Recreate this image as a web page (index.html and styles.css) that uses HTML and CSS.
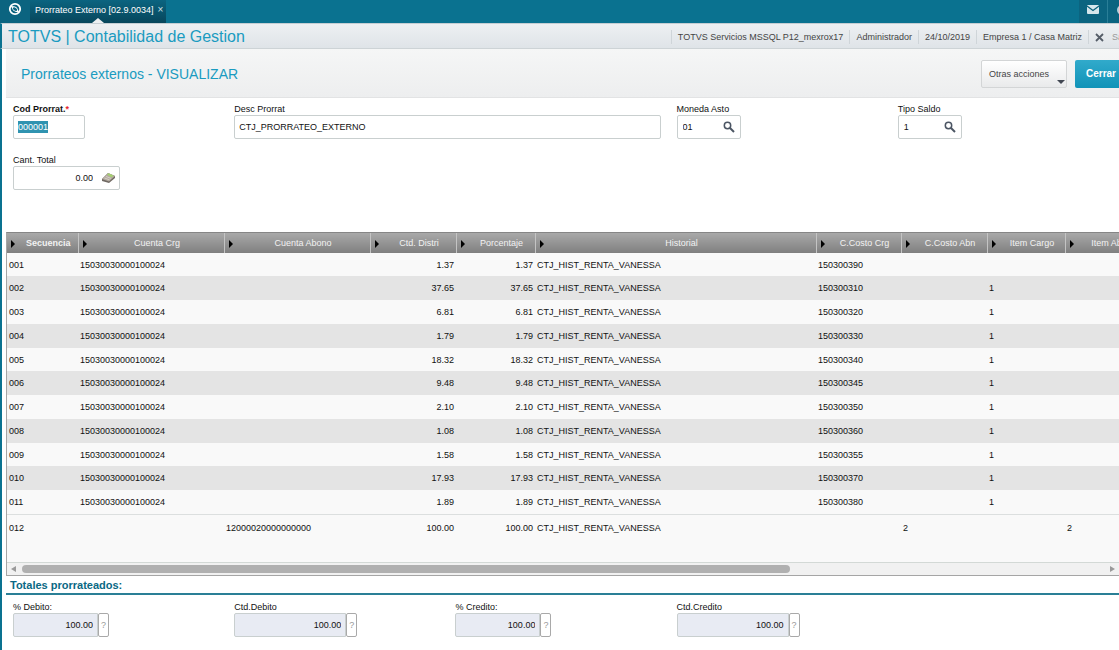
FILE: index.html
```html
<!DOCTYPE html>
<html lang="es">
<head>
    <meta charset="UTF-8">
    <meta name="viewport" content="width=device-width, initial-scale=1.0">
    <title>TOTVS | Contabilidad de Gestion</title>
    <link rel="stylesheet" href="styles.css">
</head>
<body>
    <!-- Barra superior -->
    <nav class="topbar">
        <a class="logo" href="#" aria-label="TOTVS">
            <svg width="14" height="14" viewBox="0 0 14 14">
                <circle cx="7" cy="7" r="5.200" fill="none" stroke="#fff" stroke-width="1.800"/>
                <path d="M2.500 4L6 4.200Q9.500 5 10 8L11.500 10.500L8 9.900Q4.500 9 4 6Z" fill="#fff"/>
                <ellipse cx="7" cy="7.100" rx="2.400" ry="1.400" transform="rotate(35 7 7.100)" fill="#0b6480"/>
            </svg>
        </a>
        <div class="tab">
            <a href="#">Prorrateo Externo [02.9.0034]</a>
            <button class="tab-close" aria-label="Cerrar ficha">×</button>
        </div>
        <div class="top-icons">
            <a class="top-icon" href="#" aria-label="Mensajes">
                <svg width="12" height="9" viewBox="0 0 12 9">
                    <rect width="12" height="9" rx="1" fill="#d6e6ec"/>
                    <path d="M0 1L6 5.500L12 1" fill="none" stroke="#0a6079" stroke-width="1.200"/>
                </svg>
            </a>
            <a class="top-icon" href="#" aria-label="Ayuda">
                <svg width="10" height="10" viewBox="0 0 10 10"><circle cx="5" cy="5" r="4" fill="none" stroke="#b7d0d9" stroke-width="2"/></svg>
            </a>
        </div>
    </nav>

    <!-- Cabecera del modulo -->
    <header class="module">
        <h1>TOTVS | Contabilidad de Gestion</h1>
        <ul class="info">
            <li>TOTVS Servicios MSSQL P12_mexrox17</li>
            <li>Administrador</li>
            <li>24/10/2019</li>
            <li>Empresa 1 / Casa Matriz</li>
            <li>
                <button class="exit">
                    <svg width="9" height="9" viewBox="0 0 9 9"><path d="M1 1L8 8M8 1L1 8" stroke="#555d68" stroke-width="1.800"/></svg>
                    Salir
                </button>
            </li>
        </ul>
    </header>

    <main class="page">
        <div class="page-head">
            <h2>Prorrateos externos - VISUALIZAR</h2>
            <div class="actions">
                <button class="btn btn-menu">Otras acciones</button>
                <button class="btn btn-primary">Cerrar</button>
            </div>
        </div>

        <!-- Datos del prorrateo -->
        <form class="fields">
            <div class="field">
                <label class="required" for="cod">Cod Prorrat.<span>*</span></label>
                <div class="box box-code"><input type="text" id="cod" value="000001"></div>
            </div>
            <div class="field field-wide">
                <label for="desc">Desc Prorrat</label>
                <div class="box"><input type="text" id="desc" value="CTJ_PRORRATEO_EXTERNO"></div>
            </div>
            <div class="field">
                <label for="moneda">Moneda Asto</label>
                <div class="box box-search">
                    <input type="text" id="moneda" value="01">
                    <button type="button" aria-label="Buscar moneda">
                        <svg width="12" height="12" viewBox="0 0 12 12"><circle cx="4.500" cy="4.500" r="3.200" fill="none" stroke="#4b5563" stroke-width="1.500"/><path d="M7 7L11 11" stroke="#4b5563" stroke-width="2"/></svg>
                    </button>
                </div>
            </div>
            <div class="field">
                <label for="saldo">Tipo Saldo</label>
                <div class="box box-search">
                    <input type="text" id="saldo" value="1">
                    <button type="button" aria-label="Buscar tipo de saldo">
                        <svg width="12" height="12" viewBox="0 0 12 12"><circle cx="4.500" cy="4.500" r="3.200" fill="none" stroke="#4b5563" stroke-width="1.500"/><path d="M7 7L11 11" stroke="#4b5563" stroke-width="2"/></svg>
                    </button>
                </div>
            </div>
            <div class="field">
                <label for="cant">Cant. Total</label>
                <div class="box box-number">
                    <input type="text" id="cant" value="0.00">
                    <button type="button" aria-label="Calculadora">
                        <svg width="15" height="12" viewBox="0 0 15 12">
                            <path d="M1 7L7 1L14 4V6L8 11L1 9Z" fill="#6f6862"/>
                            <path d="M1 7L7 1L14 4L8 9.500Z" fill="#b3aaa0"/>
                            <path d="M6 2.500L7.500 1.300L12.500 3.600L10.500 5.400Z" fill="#a5d070"/>
                            <path d="M3.500 6L8.500 7.800M5 4.500L10 6.400" stroke="#dcd6cd" stroke-width=".8"/>
                        </svg>
                    </button>
                </div>
            </div>
        </form>

        <!-- Detalle -->
        <div class="grid">
            <div class="grid-body">
                <table>
                    <colgroup>
                        <col class="c-sec"><col class="c-cta"><col class="c-cta"><col class="c-ctd"><col class="c-por">
                        <col class="c-hist"><col class="c-costo"><col class="c-ctd"><col class="c-item"><col class="c-ctd">
                    </colgroup>
                    <thead>
                        <tr>
                            <th class="sorted">Secuencia</th><th>Cuenta Crg</th><th>Cuenta Abono</th><th>Ctd. Distri</th><th>Porcentaje</th>
                            <th>Historial</th><th>C.Costo Crg</th><th>C.Costo Abn</th><th>Item Cargo</th><th>Item Abono</th>
                        </tr>
                    </thead>
                    <tbody>
                        <tr><td>001</td><td>15030030000100024</td><td></td><td class="num">1.37</td><td class="num">1.37</td><td>CTJ_HIST_RENTA_VANESSA</td><td>150300390</td><td></td><td></td><td></td></tr>
                        <tr><td>002</td><td>15030030000100024</td><td></td><td class="num">37.65</td><td class="num">37.65</td><td>CTJ_HIST_RENTA_VANESSA</td><td>150300310</td><td></td><td>1</td><td></td></tr>
                        <tr><td>003</td><td>15030030000100024</td><td></td><td class="num">6.81</td><td class="num">6.81</td><td>CTJ_HIST_RENTA_VANESSA</td><td>150300320</td><td></td><td>1</td><td></td></tr>
                        <tr><td>004</td><td>15030030000100024</td><td></td><td class="num">1.79</td><td class="num">1.79</td><td>CTJ_HIST_RENTA_VANESSA</td><td>150300330</td><td></td><td>1</td><td></td></tr>
                        <tr><td>005</td><td>15030030000100024</td><td></td><td class="num">18.32</td><td class="num">18.32</td><td>CTJ_HIST_RENTA_VANESSA</td><td>150300340</td><td></td><td>1</td><td></td></tr>
                        <tr><td>006</td><td>15030030000100024</td><td></td><td class="num">9.48</td><td class="num">9.48</td><td>CTJ_HIST_RENTA_VANESSA</td><td>150300345</td><td></td><td>1</td><td></td></tr>
                        <tr><td>007</td><td>15030030000100024</td><td></td><td class="num">2.10</td><td class="num">2.10</td><td>CTJ_HIST_RENTA_VANESSA</td><td>150300350</td><td></td><td>1</td><td></td></tr>
                        <tr><td>008</td><td>15030030000100024</td><td></td><td class="num">1.08</td><td class="num">1.08</td><td>CTJ_HIST_RENTA_VANESSA</td><td>150300360</td><td></td><td>1</td><td></td></tr>
                        <tr><td>009</td><td>15030030000100024</td><td></td><td class="num">1.58</td><td class="num">1.58</td><td>CTJ_HIST_RENTA_VANESSA</td><td>150300355</td><td></td><td>1</td><td></td></tr>
                        <tr><td>010</td><td>15030030000100024</td><td></td><td class="num">17.93</td><td class="num">17.93</td><td>CTJ_HIST_RENTA_VANESSA</td><td>150300370</td><td></td><td>1</td><td></td></tr>
                        <tr><td>011</td><td>15030030000100024</td><td></td><td class="num">1.89</td><td class="num">1.89</td><td>CTJ_HIST_RENTA_VANESSA</td><td>150300380</td><td></td><td>1</td><td></td></tr>
                        <tr class="last"><td>012</td><td></td><td>12000020000000000</td><td class="num">100.00</td><td class="num">100.00</td><td>CTJ_HIST_RENTA_VANESSA</td><td></td><td>2</td><td></td><td>2</td></tr>
                    </tbody>
                </table>
            </div>
            <div class="scrollbar">
                <span class="arrow arrow-left"></span>
                <div class="track"><div class="thumb"></div></div>
                <span class="arrow arrow-right"></span>
            </div>
        </div>

        <!-- Totales -->
        <h3 class="totals-title">Totales prorrateados:</h3>
        <form class="fields totals">
            <div class="field">
                <label for="pdeb">% Debito:</label>
                <div class="total"><input type="text" id="pdeb" value="100.00" readonly><button type="button">?</button></div>
            </div>
            <div class="field">
                <label for="cdeb">Ctd.Debito</label>
                <div class="total total-wide"><input type="text" id="cdeb" value="100.00" readonly><button type="button">?</button></div>
            </div>
            <div class="field">
                <label for="pcre">% Credito:</label>
                <div class="total"><input type="text" id="pcre" value="100.00" readonly><button type="button">?</button></div>
            </div>
            <div class="field">
                <label for="ccre">Ctd.Credito</label>
                <div class="total total-wide"><input type="text" id="ccre" value="100.00" readonly><button type="button">?</button></div>
            </div>
        </form>
    </main>
<script>
// el codigo queda seleccionado al abrir
const cod = document.getElementById('cod');
cod.focus();
cod.select();
</script>
</body>
</html>
```
FILE: styles.css
```css
:root {
    --teal: #0a7290;
    --teal-dark: #0b6480;
    --link: #1a9bc0;
    --border: #c9cfcf;
}
* {
    box-sizing: border-box;
}
body {
    margin: 0;
    font-family: "Liberation Sans", Arial, sans-serif;
    font-size: 9px;
    line-height: 12px;
    color: #111;
    background: #fff;
    overflow-x: hidden;
}
h1, h2, h3, ul {
    margin: 0;
    padding: 0;
    font-weight: normal;
}
a {
    color: inherit;
    text-decoration: none;
}
button, input {
    font: inherit;
    color: inherit;
    border: none;
    background: none;
    padding: 0;
    margin: 0;
    outline: none;
}
button {
    cursor: pointer;
}
svg {
    display: block;
}

/* barra superior */
.topbar {
    display: flex;
    height: 23px;
    background: var(--teal);
    color: #fff;
    overflow: hidden;
}
.logo {
    width: 30px;
    padding: 2px 8px;
    background: var(--teal-dark);
}
.tab {
    position: relative;
    display: flex;
    align-items: center;
    gap: 4px;
    padding: 0 3px 4px 5px;
    background: linear-gradient(#0b6480, #07465b);
}
.tab::after {
    content: "";
    position: absolute;
    left: 50%;
    bottom: 0;
    margin-left: -6px;
    border: 6px solid transparent;
    border-top: 0;
    border-bottom: 5px solid #eceff1;
}
.tab-close {
    color: #cfe0e6;
    font-size: 10px;
    line-height: 12px;
}
.top-icons {
    display: flex;
    margin-left: auto;
    margin-right: -18px;
}
.top-icon {
    display: flex;
    align-items: center;
    justify-content: center;
    width: 29px;
    padding-bottom: 4px;
    background: var(--teal-dark);
    border-right: 1px solid #2a7f98;
}

/* cabecera */
.module {
    display: flex;
    align-items: center;
    height: 26px;
    padding: 2px 0 0 6px;
    border-left: 2px solid var(--teal);
    border-top: 1px solid #c5ced3;
    border-bottom: 1px solid #cdd3d6;
    background: linear-gradient(#edf0f2, #dfe4e8);
    overflow: hidden;
}
.module h1 {
    font-size: 16px;
    line-height: 20px;
    color: var(--link);
}
.info {
    display: flex;
    margin-left: auto;
    margin-right: -17px;
    list-style: none;
    color: #444;
    white-space: nowrap;
}
.info li {
    padding: 1px 6px;
    border-left: 1px solid #cfd5d9;
}
.exit {
    display: flex;
    align-items: center;
    gap: 8px;
    color: #999;
}

/* pagina */
.page {
    border-left: 2px solid var(--teal);
    padding-left: 4px;
    overflow: hidden;
}
.page-head {
    display: flex;
    align-items: center;
    justify-content: space-between;
    height: 49px;
    padding: 2px 0 0 15px;
    background: linear-gradient(#f5f6f6, #edeeef);
    border-bottom: 1px solid #e2e3e4;
}
.page-head h2 {
    font-size: 14px;
    line-height: 20px;
    color: var(--link);
}
.actions {
    display: flex;
    gap: 8px;
    margin-right: -8px;
}
.btn {
    height: 28px;
    border-radius: 2px;
}
.btn-menu {
    position: relative;
    width: 86px;
    padding-right: 10px;
    color: #444;
    border: 1px solid #d3d5d6;
    background: linear-gradient(#fff, #e9eaeb);
}
.btn-menu::after {
    content: "";
    position: absolute;
    right: 1px;
    bottom: 3px;
    border: 4px solid transparent;
    border-top-color: #414752;
    border-bottom: 0;
}
.btn-primary {
    width: 52px;
    color: #fff;
    font-size: 10px;
    font-weight: bold;
    background: linear-gradient(#31aacb, #1193b8);
}

/* campos */
.fields {
    display: grid;
    grid-template-columns: repeat(5, 1fr);
    row-gap: 15px;
    padding: 5px 0 42px 7px;
}
.field {
    display: flex;
    flex-direction: column;
    align-items: flex-start;
}
.field-wide {
    grid-column: span 2;
    padding-right: 16px;
}
.required {
    font-weight: bold;
}
.required span {
    color: #e8262d;
}
.box {
    display: flex;
    align-items: center;
    width: 100%;
    height: 24px;
    padding: 0 4px;
    border: 1px solid var(--border);
    border-radius: 2px;
}
.box input {
    flex: 1;
    min-width: 0;
    height: 12px;
}
.box-code {
    width: 72px;
}
.box-search {
    width: 64px;
    padding: 0 5px;
}
.box-number {
    width: 107px;
    gap: 8px;
    padding: 0 3px;
}
.box-number input,
.total input {
    text-align: right;
}
#cod::selection {
    color: #fff;
    background: #2f93b0;
}

/* detalle */
.grid {
    border: 1px solid #a5a5a5;
    border-top-color: #868686;
    border-right: 0;
}
.grid-body {
    height: 329px;
    overflow: hidden;
    background: #f9f9f9;
}
table {
    width: 1144px;
    table-layout: fixed;
    border-collapse: collapse;
}
.c-sec { width: 71px; }
.c-cta { width: 146px; }
.c-ctd { width: 86px; }
.c-por { width: 79px; }
.c-hist { width: 281px; }
.c-costo { width: 85px; }
.c-item { width: 78px; }
th {
    position: relative;
    height: 20px;
    padding: 0 0 0 12px;
    font-weight: normal;
    color: #f2f2f2;
    background: linear-gradient(#a9a9a9, #7f7f7f);
    border-right: 1px solid #c4c4c4;
}
th::before {
    content: "";
    position: absolute;
    left: 4px;
    top: 7px;
    border: 4px solid transparent;
    border-left-color: #000;
    border-right: 0;
}
.sorted {
    font-weight: bold;
}
td {
    height: 24px;
    padding: 0 2px;
}
tbody tr:nth-child(4n+1) td {
    height: 23px;
}
tbody tr:nth-child(even) {
    background: #e4e4e4;
}
.num {
    text-align: right;
}
tbody tr.last {
    background: #f9f9f9;
    border-top: 1px solid #dcdfdf;
}
.last td {
    height: 27px;
}
.scrollbar {
    display: flex;
    align-items: center;
    gap: 6px;
    height: 13px;
    padding: 0 4px;
    background: #f1f1f1;
    border-top: 1px solid #d3d9d6;
}
.track {
    flex: 1;
}
.thumb {
    width: 71%;
    height: 8px;
    border-radius: 4px;
    background: #b0b0b0;
}
.arrow {
    border: 3px solid transparent;
}
.arrow-left {
    border-left: 0;
    border-right: 5px solid #9a9a9a;
}
.arrow-right {
    border-right: 0;
    border-left: 5px solid #9a9a9a;
}

/* totales */
.totals-title {
    padding: 2px 4px 1px;
    font-size: 11px;
    line-height: 14px;
    font-weight: bold;
    color: #0a6884;
    border-bottom: 2px solid #2a7f96;
}
.totals {
    padding: 6px 0 13px 7px;
}
.total {
    display: flex;
    width: 96px;
    height: 24px;
}
.total-wide {
    width: 123px;
}
.total input {
    flex: 1;
    min-width: 0;
    padding: 0 4px;
    background: #e8ebf3;
    border: 1px solid var(--border);
    border-radius: 2px 0 0 2px;
}
.total button {
    width: 11px;
    color: #999;
    border: 1px solid #a9a9a9;
    border-radius: 2px;
}
```
